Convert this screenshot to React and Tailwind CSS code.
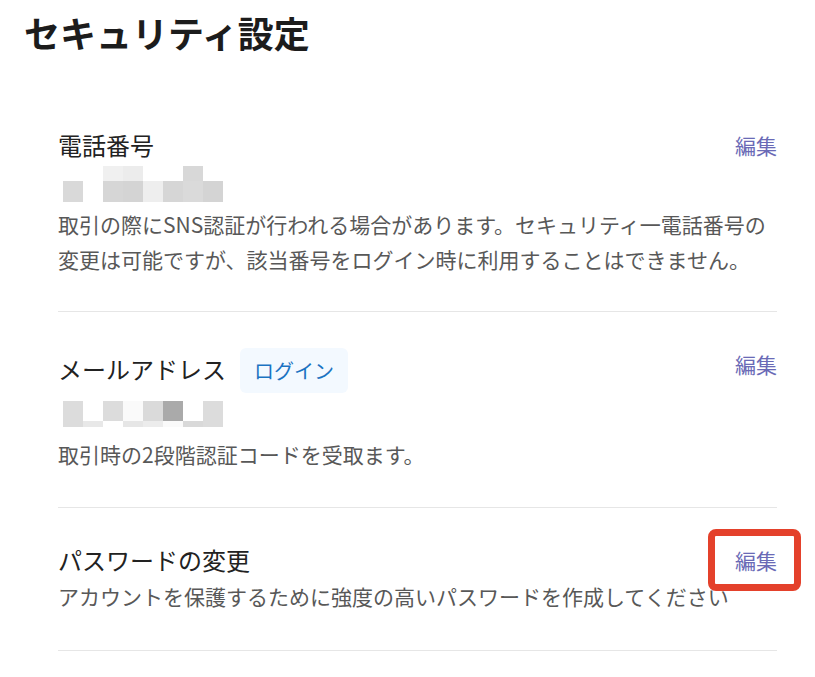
import React from "react";

const phoneTop = ["bg-white", "bg-white", "bg-[#f0f0f0]", "bg-[#ececec]", "bg-white", "bg-white", "bg-[#d8d8d8]", "bg-white"];
const phoneBottom = ["bg-[#d9d9d9]", "bg-white", "bg-[#d6d6d6]", "bg-[#d4d4d4]", "bg-[#eeeeee]", "bg-[#d6d6d6]", "bg-[#dadada]", "bg-[#d4d4d4]"];
const mailTop = ["bg-[#dcdcdc]", "bg-white", "bg-[#dcdcdc]", "bg-[#fafafa]", "bg-[#dadada]", "bg-[#aaaaaa]", "bg-white", "bg-[#dcdcdc]"];
const mailBottom = ["bg-[#dcdcdc]", "bg-[#e8e8e8]", "bg-white", "bg-[#e6e6e6]", "bg-[#ececec]", "bg-[#fafafa]", "bg-[#d9d9d9]", "bg-[#dcdcdc]"];

function Mosaic({ top, bottom, topH, bottomH }) {
  return (
    <div className="ml-[5px] flex flex-col">
      <div className="flex">
        {top.map((c, i) => (
          <div key={i} className={`w-5 ${topH} ${c}`} />
        ))}
      </div>
      <div className="flex">
        {bottom.map((c, i) => (
          <div key={i} className={`w-5 ${bottomH} ${c}`} />
        ))}
      </div>
    </div>
  );
}

function Edit({ boxed }) {
  return (
    <span className="relative text-[21px] leading-[32px] text-[#6a6ab6]">
      編集
      {boxed && (
        <span className="absolute left-[-27px] right-[-24px] top-[-15px] bottom-[-15px] rounded-[8px] border-[7px] border-[#e4412b]" />
      )}
    </span>
  );
}

export default function App() {
  return (
    <div className="w-[815px] h-[677px] overflow-hidden bg-white font-['Noto_Sans_CJK_JP','Noto_Sans',sans-serif]">
      <h1 className="pl-6 pt-[10px] text-[36px] leading-[44px] font-bold text-[#1c1c1c]">
        セキュリティ設定
      </h1>

      <div className="ml-[58px] w-[719px] mt-[75px]">
        {/* 電話番号 */}
        <section className="pb-[34px] border-b border-[#e6e6e6]">
          <div className="flex items-center justify-between h-8">
            <span className="text-[24px] leading-[32px] text-[#222]">電話番号</span>
            <Edit />
          </div>
          <div className="mt-[5px]">
            <Mosaic top={phoneTop} bottom={phoneBottom} topH="h-[15px]" bottomH="h-[21px]" />
          </div>
          <p className="mt-[5px] text-[21px] leading-[35px] text-[#585858]">
            取引の際にSNS認証が行われる場合があります。セキュリティ一電話番号の
            <br />
            変更は可能ですが、該当番号をログイン時に利用することはできません。
          </p>
        </section>

        {/* メールアドレス */}
        <section className="pt-9 pb-[35px] border-b border-[#e6e6e6]">
          <div className="flex items-start justify-between h-[45px]">
            <div className="flex items-center h-[45px]">
              <span className="text-[24px] leading-[32px] text-[#222] -mt-[3px]">メールアドレス</span>
              <span className="ml-[14px] h-[45px] flex items-center px-[14px] rounded-[6px] bg-[#f3f9ff] text-[20px] text-[#1b73c2]">
                ログイン
              </span>
            </div>
            <div>
              <Edit />
            </div>
          </div>
          <div className="mt-2">
            <Mosaic top={mailTop} bottom={mailBottom} topH="h-5" bottomH="h-[6px]" />
          </div>
          <p className="mt-[10px] text-[21px] leading-[35px] text-[#585858]">
            取引時の2段階認証コードを受取ます。
          </p>
        </section>

        {/* パスワードの変更 */}
        <section className="pt-9 pb-[39px] border-b border-[#e6e6e6]">
          <div className="flex items-center justify-between h-8">
            <span className="text-[24px] leading-[32px] text-[#222]">パスワードの変更</span>
            <Edit boxed />
          </div>
          <p className="mt-[5px] text-[21px] leading-[30px] text-[#585858] whitespace-nowrap">
            アカウントを保護するために強度の高いパスワードを作成してください
          </p>
        </section>
      </div>
    </div>
  );
}
